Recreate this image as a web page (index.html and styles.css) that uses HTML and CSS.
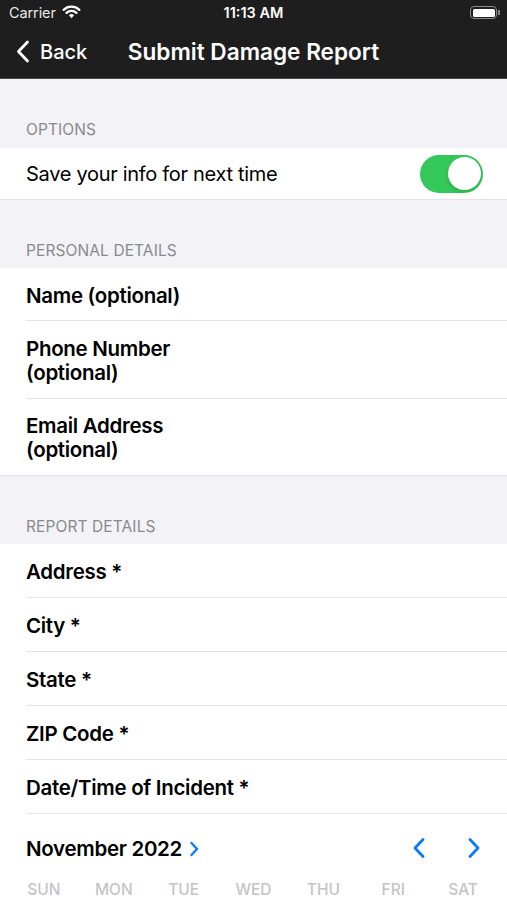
FILE: index.html
```html
<!DOCTYPE html>
<html>
<head>
<meta charset="utf-8">
<link rel="stylesheet" href="styles.css">
</head>
<body>
<div class="screen">
  <div class="statusbar">
    <div class="sb-left">
      <span class="carrier">Carrier</span>
      <svg class="wifi" width="19" height="14" viewBox="0 0 19 14">
        <path d="M9.5 13.2 L6.9 10.3 A3.8 3.8 0 0 1 12.1 10.3 Z" fill="#fff"/>
        <path d="M4.5 7.9 A7.2 7.2 0 0 1 14.5 7.9" stroke="#fff" stroke-width="2.2" fill="none" stroke-linecap="round"/>
        <path d="M1.6 4.9 A11.4 11.4 0 0 1 17.4 4.9" stroke="#fff" stroke-width="2.2" fill="none" stroke-linecap="round"/>
      </svg>
    </div>
    <div class="time">11:13 AM</div>
    <div class="sb-right">
      <div class="battery"><div class="battery-fill"></div></div>
      <div class="battery-tip"></div>
    </div>
  </div>
  <div class="navbar">
    <div class="back">
      <svg width="14" height="23" viewBox="0 0 14 23"><path d="M11.5 2 L2.5 11.5 L11.5 21" stroke="#fff" stroke-width="2.8" fill="none" stroke-linecap="round" stroke-linejoin="round"/></svg>
      <span>Back</span>
    </div>
    <div class="title">Submit Damage Report</div>
  </div>

  <div class="content">
    <div class="section-header first">OPTIONS</div>
    <div class="group">
      <div class="row opt last">
        <span class="row-text">Save your info for next time</span>
        <div class="toggle"><div class="knob"></div></div>
      </div>
    </div>

    <div class="section-header">PERSONAL DETAILS</div>
    <div class="group">
      <div class="row short"><span class="label">Name (optional)</span></div>
      <div class="row tall"><span class="label">Phone Number<br>(optional)</span></div>
      <div class="row tall2 last"><span class="label">Email Address<br>(optional)</span></div>
    </div>

    <div class="section-header">REPORT DETAILS</div>
    <div class="group">
      <div class="row"><span class="label">Address *</span></div>
      <div class="row"><span class="label">City *</span></div>
      <div class="row"><span class="label">State *</span></div>
      <div class="row"><span class="label">ZIP Code *</span></div>
      <div class="row"><span class="label">Date/Time of Incident *</span></div>
      <div class="calendar">
        <div class="cal-header">
          <div class="month">
            <span>November 2022</span>
            <svg width="10" height="16" viewBox="0 0 10 16"><path d="M2.5 2 L8 8 L2.5 14" stroke="#0a7aff" stroke-width="2.4" fill="none" stroke-linecap="round" stroke-linejoin="round"/></svg>
          </div>
          <div class="cal-nav">
            <svg width="14" height="22" viewBox="0 0 14 22"><path d="M11 2.5 L3 11 L11 19.5" stroke="#0a7aff" stroke-width="2.8" fill="none" stroke-linecap="round" stroke-linejoin="round"/></svg>
            <svg width="14" height="22" viewBox="0 0 14 22"><path d="M3 2.5 L11 11 L3 19.5" stroke="#0a7aff" stroke-width="2.8" fill="none" stroke-linecap="round" stroke-linejoin="round"/></svg>
          </div>
        </div>
        <div class="weekdays">
          <span>SUN</span><span>MON</span><span>TUE</span><span>WED</span><span>THU</span><span>FRI</span><span>SAT</span>
        </div>
      </div>
    </div>
  </div>
</div>
</body>
</html>
```

FILE: styles.css
```css
* { box-sizing: border-box; }
html, body {
  margin: 0;
  padding: 0;
  background: #f2f2f7;
}
body {
  font-family: Inter, "Liberation Sans", sans-serif;
  color: #000;
}
.screen {
  width: 507px;
  height: 900px;
  overflow: hidden;
  background: #f2f2f7;
}
.statusbar {
  height: 25px;
  background: #1e1e1e;
  color: #fff;
  display: flex;
  align-items: center;
  justify-content: space-between;
  padding: 0 7px 0 9px;
  position: relative;
}
.sb-left {
  display: flex;
  align-items: center;
  gap: 6px;
  font-size: 14.5px;
  letter-spacing: -0.1px;
  color: #e8e8e8;
}
.wifi { margin-top: -2px; }
.time {
  position: absolute;
  left: 0;
  right: 0;
  text-align: center;
  font-size: 14.5px;
  font-weight: 600;
  pointer-events: none;
}
.sb-right {
  display: flex;
  align-items: center;
}
.battery {
  width: 27px;
  height: 13px;
  border: 1.5px solid #8a8a8a;
  border-radius: 4px;
  padding: 1.5px;
}
.battery-fill {
  width: 100%;
  height: 100%;
  background: #fff;
  border-radius: 1.5px;
}
.battery-tip {
  width: 2px;
  height: 5px;
  background: #8a8a8a;
  border-radius: 0 1px 1px 0;
  margin-left: 1px;
}
.navbar {
  height: 54px;
  background: #1e1e1e;
  border-bottom: 1px solid #4a4a4a;
  display: flex;
  align-items: center;
  position: relative;
  color: #fff;
}
.back {
  display: flex;
  align-items: center;
  gap: 10px;
  padding-left: 16px;
  font-size: 20px;
  font-weight: 500;
}
.title {
  position: absolute;
  left: 0;
  right: 0;
  text-align: center;
  font-size: 22.6px;
  font-weight: 600;
  letter-spacing: 0;
  pointer-events: none;
}
.content {
  background: #f2f2f7;
}
.section-header {
  height: 68px;
  padding: 41px 26px 7px;
  line-height: 20px;
  font-size: 15.5px;
  color: #8a8a8e;
  letter-spacing: 0.1px;
}
.section-header.first {
  height: 69px;
}
.group {
  background: #fff;
  border-bottom: 1px solid #e3e3e8;
}
.row {
  min-height: 54px;
  display: flex;
  align-items: center;
  justify-content: space-between;
  padding: 2px 24px 0 26px;
  position: relative;
}
.row::after {
  content: "";
  position: absolute;
  left: 26px;
  right: 0;
  bottom: 0;
  height: 1px;
  background: #e3e3e8;
}
.row.last::after { display: none; }
.row.opt { min-height: 51px; padding-top: 0; }
.row.short { min-height: 53px; }
.row.tall { min-height: 78px; }
.row.tall2 { min-height: 76px; }
.row-text {
  font-size: 20px;
  letter-spacing: -0.3px;
}
.label {
  font-size: 20.5px;
  font-weight: 600;
  line-height: 24px;
  letter-spacing: -0.3px;
}
.toggle {
  width: 63px;
  height: 38px;
  border-radius: 19px;
  background: #34c759;
  padding: 2.5px;
  display: flex;
  justify-content: flex-end;
}
.knob {
  width: 33px;
  height: 33px;
  border-radius: 50%;
  background: #fff;
  box-shadow: 0 2px 4px rgba(0,0,0,0.15);
}
.calendar {
  padding: 0 26px;
}
.cal-header {
  height: 68px;
  display: flex;
  align-items: center;
  justify-content: space-between;
}
.month {
  display: flex;
  align-items: center;
  gap: 7px;
  font-size: 20.5px;
  font-weight: 600;
  letter-spacing: -0.3px;
}
.month svg { margin-top: 1px; }
.cal-nav {
  display: flex;
  gap: 41px;
  margin-right: 0;
}
.weekdays {
  display: grid;
  grid-template-columns: repeat(7, 1fr);
  height: 40px;
  align-items: start;
  margin: 0 -17px 0 -17px;
}
.weekdays span {
  text-align: center;
  font-size: 15.5px;
  font-weight: 500;
  color: #c4c4c8;
  line-height: 16px;
}
```
